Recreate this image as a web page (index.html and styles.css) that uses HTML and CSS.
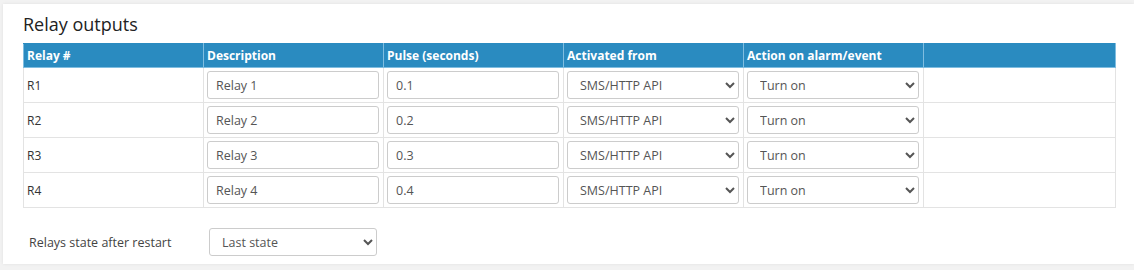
FILE: index.html
```html
<!DOCTYPE html>
<html>
  <head>
    <meta charset="UTF-8" />
    <title>Relay outputs</title>
    <link rel="stylesheet" href="styles.css">
  </head>
  <body>
    <div class="panel">
      <h2 class="panelTitle">Relay outputs</h2>

      <table class="relayTable">
        <colgroup>
          <col class="colNarrow" />
          <col class="colNarrow" />
          <col class="colNarrow" />
          <col class="colNarrow" />
          <col class="colNarrow" />
          <col />
        </colgroup>
        <tr>
          <th>Relay #</th>
          <th>Description</th>
          <th>Pulse (seconds)</th>
          <th>Activated from</th>
          <th>Action on alarm/event</th>
          <th></th>
        </tr>
        <tr>
          <td>R1</td>
          <td><input type="text" value="Relay 1" /></td>
          <td><input type="text" value="0.1" /></td>
          <td><select><option>SMS/HTTP API</option></select></td>
          <td><select><option>Turn on</option></select></td>
          <td></td>
        </tr>
        <tr>
          <td>R2</td>
          <td><input type="text" value="Relay 2" /></td>
          <td><input type="text" value="0.2" /></td>
          <td><select><option>SMS/HTTP API</option></select></td>
          <td><select><option>Turn on</option></select></td>
          <td></td>
        </tr>
        <tr>
          <td>R3</td>
          <td><input type="text" value="Relay 3" /></td>
          <td><input type="text" value="0.3" /></td>
          <td><select><option>SMS/HTTP API</option></select></td>
          <td><select><option>Turn on</option></select></td>
          <td></td>
        </tr>
        <tr>
          <td>R4</td>
          <td><input type="text" value="Relay 4" /></td>
          <td><input type="text" value="0.4" /></td>
          <td><select><option>SMS/HTTP API</option></select></td>
          <td><select><option>Turn on</option></select></td>
          <td></td>
        </tr>
      </table>

      <div class="restartRow">
        <div class="restartLabel">Relays state after restart</div>
        <select class="restartSelect"><option>Last state</option></select>
      </div>
    </div>
  </body>
</html>
```

FILE: styles.css
```css
body {
  margin: 0;
  background-color: #f2f2f2;
  font-family: "Open Sans", "Noto Sans", sans-serif;
  color: #333;
}

.panel {
  margin: 4px 0 6px 3px;
  background-color: #fff;
  padding: 10px 18px 7px 20px;
  box-sizing: border-box;
  height: 260px;
  box-shadow: 0 0 3px rgba(0, 0, 0, 0.08);
}

.panelTitle {
  margin: 0 0 9px 0;
  font-size: 18px;
  font-weight: normal;
  line-height: 20px;
  color: #222;
}

.relayTable {
  border-collapse: collapse;
  width: 1093px;
  table-layout: fixed;
  font-size: 12px;
}

.colNarrow {
  width: 180px;
}

.relayTable th,
.relayTable td {
  border: solid 1px #e3e3e3;
  text-align: left;
  padding: 3px 4px 3px 3px;
}

.relayTable th {
  background-color: #2a8bc0;
  color: #fff;
  font-weight: bold;
  height: 17px;
  border-color: #7fbde0;
  border-top-color: #2a8bc0;
}

.relayTable td {
  height: 28px;
}

input,
select {
  font-family: inherit;
  font-size: 12.5px;
  color: #555;
  width: 100%;
  height: 28px;
  box-sizing: border-box;
  border: solid 1px #ccc;
  border-radius: 3px;
  background-color: #fff;
  padding: 0 8px;
}

.restartRow {
  display: flex;
  align-items: center;
  margin-top: 20px;
  padding-left: 6px;
}

.restartLabel {
  width: 180px;
  font-size: 12.5px;
  color: #444;
}

.restartSelect {
  width: 168px;
}
```
